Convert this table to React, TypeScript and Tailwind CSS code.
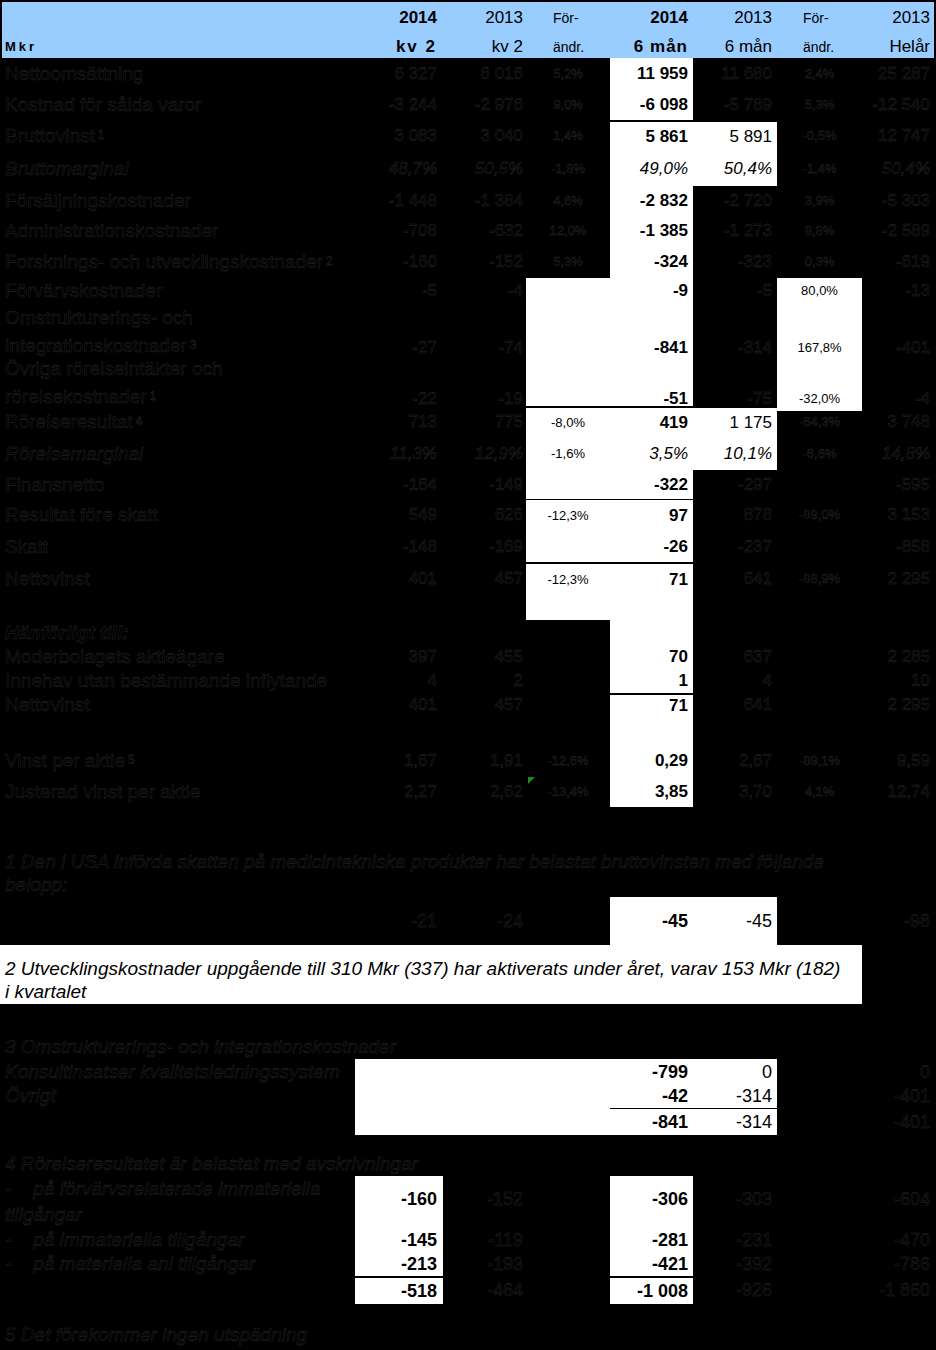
import React from 'react';

const COLS = 'grid grid-cols-[355px_88px_83px_84px_83px_84px_85px_74px]';
const GHOST = 'text-black [-webkit-text-stroke:0.4px_#2c2c2c]';
const PAD = ['pr-[6px]', 'pr-[3px]', '', 'pr-[5px]', 'pr-[5px]', '', 'pr-[6px]'];

type RowDef = {
  label: React.ReactNode;
  h: number;
  v: string[];
  white: number[];
  top?: 1 | 2;
  italic?: boolean;
  twoLine?: boolean;
  mark?: boolean;
};

const sup = (n: string) => <sup className="text-[12px] ml-[3px] relative -top-[3px]">{n}</sup>;

const rows: RowDef[] = [
  { label: 'Nettoomsättning', h: 32, v: ['6 327', '6 016', '5,2%', '11 959', '11 680', '2,4%', '25 287'], white: [3] },
  { label: 'Kostnad för sålda varor', h: 30, v: ['-3 244', '-2 976', '9,0%', '-6 098', '-5 789', '5,3%', '-12 540'], white: [3] },
  { label: <>Bruttovinst{sup('1')}</>, h: 32, v: ['3 083', '3 040', '1,4%', '5 861', '5 891', '-0,5%', '12 747'], white: [3, 4], top: 2 },
  { label: 'Bruttomarginal', h: 34, v: ['48,7%', '50,5%', '-1,8%', '49,0%', '50,4%', '-1,4%', '50,4%'], white: [3, 4], italic: true },
  { label: 'Försäljningskostnader', h: 29, v: ['-1 448', '-1 384', '4,6%', '-2 832', '-2 720', '3,9%', '-5 303'], white: [3] },
  { label: 'Administrationskostnader', h: 31, v: ['-708', '-632', '12,0%', '-1 385', '-1 273', '8,8%', '-2 589'], white: [3] },
  { label: <>Forsknings- och utvecklingskostnader{sup('2')}</>, h: 32, v: ['-160', '-152', '5,3%', '-324', '-323', '0,3%', '-619'], white: [3] },
  { label: 'Förvärvskostnader', h: 26, v: ['-5', '-4', '', '-9', '-5', '80,0%', '-13'], white: [2, 3, 5] },
  { label: <>Omstrukturerings- och<br />integrationskostnader{sup('3')}</>, h: 51, v: ['-27', '-74', '', '-841', '-314', '167,8%', '-401'], white: [2, 3, 5], twoLine: true },
  { label: <>Övriga rörelseintäkter och<br />rörelsekostnader{sup('1')}</>, h: 51, v: ['-22', '-19', '', '-51', '-75', '-32,0%', '-4'], white: [2, 3, 5], twoLine: true },
  { label: <>Rörelseresultat{sup('4')}</>, h: 31, v: ['713', '775', '-8,0%', '419', '1 175', '-64,3%', '3 748'], white: [2, 3, 4], top: 2 },
  { label: 'Rörelsemarginal', h: 33, v: ['11,3%', '12,9%', '-1,6%', '3,5%', '10,1%', '-6,6%', '14,8%'], white: [2, 3, 4], italic: true },
  { label: 'Finansnetto', h: 29, v: ['-164', '-149', '', '-322', '-297', '', '-595'], white: [2, 3] },
  { label: 'Resultat före skatt', h: 32, v: ['549', '626', '-12,3%', '97', '878', '-89,0%', '3 153'], white: [2, 3], top: 1 },
  { label: 'Skatt', h: 31, v: ['-148', '-169', '', '-26', '-237', '', '-858'], white: [2, 3] },
  { label: 'Nettovinst', h: 33, v: ['401', '457', '-12,3%', '71', '641', '-88,9%', '2 295'], white: [2, 3], top: 2 },
  { label: '', h: 25, v: ['', '', '', '', '', '', ''], white: [2, 3] },
  { label: <span className="font-bold">Hänförligt till:</span>, h: 25, v: ['', '', '', '', '', '', ''], white: [3], italic: true },
  { label: 'Moderbolagets aktieägare', h: 24, v: ['397', '455', '', '70', '637', '', '2 285'], white: [3] },
  { label: 'Innehav utan bestämmande inflytande', h: 24, v: ['4', '2', '', '1', '4', '', '10'], white: [3] },
  { label: 'Nettovinst', h: 24, v: ['401', '457', '', '71', '641', '', '2 295'], white: [3], top: 2 },
  { label: '', h: 28, v: ['', '', '', '', '', '', ''], white: [3] },
  { label: <>Vinst per aktie{sup('5')}</>, h: 32, v: ['1,67', '1,91', '-12,6%', '0,29', '2,67', '-89,1%', '9,59'], white: [3] },
  { label: 'Justerad vinst per aktie', h: 30, v: ['2,27', '2,62', '-13,4%', '3,85', '3,70', '4,1%', '12,74'], white: [3], mark: true },
];

function MainRow({ r }: { r: RowDef }) {
  return (
    <div className={COLS} style={{ height: r.h }}>
      <div
        className={`${GHOST} pl-[5px] text-[19px] ${r.italic ? 'italic' : ''} flex flex-col justify-center ${
          r.twoLine ? 'leading-[28px]' : 'leading-[20px]'
        }`}
      >
        <div className="whitespace-nowrap">{r.label}</div>
      </div>
      {r.v.map((v, i) => {
        const white = r.white.includes(i);
        const pct = i === 2 || i === 5;
        const border = white && r.top ? (r.top === 2 ? 'border-t-2 border-black' : 'border-t border-black') : '';
        return (
          <div
            key={i}
            className={`relative flex leading-[20px] whitespace-nowrap ${PAD[i]} ${pct ? 'justify-center text-[13px]' : 'justify-end text-[17px]'} ${
              r.twoLine ? 'items-end pb-[2px]' : 'items-center'
            } ${white ? 'bg-white text-black' : GHOST} ${white && i === 3 && !r.italic ? 'font-bold' : ''} ${
              r.italic && !pct ? 'italic' : ''
            } ${border}`}
          >
            {r.mark && i === 2 && (
              <span className="absolute top-0 left-[2px] w-0 h-0 border-t-[7px] border-t-[#1f8a1f] border-r-[7px] border-r-transparent" />
            )}
            {v}
          </div>
        );
      })}
    </div>
  );
}

function Header() {
  const cell = (a: string, b: string, cls: string, bold = false) => (
    <div className={`flex flex-col ${cls} ${bold ? 'font-bold' : ''}`}>
      <div className="mt-[6px] h-[20px] leading-[20px]">{a}</div>
      <div className="mt-[9px] h-[20px] leading-[20px]">{b}</div>
    </div>
  );
  return (
    <div className="pt-[2px] px-[2px]">
      <div className={`grid grid-cols-[353px_88px_83px_84px_83px_84px_85px_72px] h-[56px] bg-[#99ccff] text-black`}>
        <div className="flex flex-col">
          <div className="mt-[35px] pl-[3px] text-[13px] font-bold tracking-[3px] leading-[20px]">Mkr</div>
        </div>
        {cell('2014', 'kv 2', 'items-end pr-[6px] text-[17px] [&>div:last-child]:tracking-[2px]', true)}
        {cell('2013', 'kv 2', 'items-end pr-[3px] text-[17px]')}
        {cell('För-', 'ändr.', 'items-start pl-[27px] text-[14px]')}
        {cell('2014', '6 mån', 'items-end pr-[5px] text-[17px] [&>div:last-child]:tracking-[1px]', true)}
        {cell('2013', '6 mån', 'items-end pr-[5px] text-[17px]')}
        {cell('För-', 'ändr.', 'items-start pl-[26px] text-[14px]')}
        {cell('2013', 'Helår', 'items-end pr-[4px] text-[17px]')}
      </div>
    </div>
  );
}

type FnCell = { v: string; white?: boolean; bold?: boolean; top?: 1 | 2 };

function FnRow({ label, h, cells, labelCls = '', valCls = 'items-center' }: { label?: React.ReactNode; h: number; cells: FnCell[]; labelCls?: string; valCls?: string }) {
  return (
    <div className={COLS} style={{ height: h }}>
      <div className={`${GHOST} italic pl-[5px] text-[19px] whitespace-nowrap ${labelCls}`}>{label}</div>
      {cells.map((c, i) => (
        <div
          key={i}
          className={`flex justify-end leading-[24px] text-[18px] whitespace-nowrap ${PAD[i]} ${valCls} ${
            c.white ? 'bg-white text-black' : GHOST
          } ${c.bold ? 'font-bold' : ''} ${c.top === 2 ? 'border-t-2 border-black' : c.top === 1 ? 'border-t border-black' : ''}`}
        >
          {c.v}
        </div>
      ))}
    </div>
  );
}

const e = (n = 7): FnCell[] => Array.from({ length: n }, () => ({ v: '' }));

export default function App() {
  return (
    <div className="w-[936px] h-[1350px] bg-black font-['Liberation_Sans',Arial,sans-serif] overflow-hidden">
      <Header />
      {rows.map((r, i) => (
        <MainRow key={i} r={r} />
      ))}

      {/* fotnoter */}
      <div className="h-[43px]" />
      <div className={`${GHOST} italic text-[19px] leading-[23px] pl-[5px] h-[47px] whitespace-nowrap`}>
        1 Den i USA införda skatten på medicintekniska produkter har belastat bruttovinsten med följande
        <br />
        belopp:
      </div>
      <FnRow
        h={48}
        cells={[{ v: '-21' }, { v: '-24' }, { v: '' }, { v: '-45', white: true, bold: true }, { v: '-45', white: true }, { v: '' }, { v: '-98' }]}
      />
      <div className="w-[862px] h-[59px] bg-white text-black italic text-[19px] leading-[23px] pl-[5px] pt-[12px] whitespace-nowrap">
        2 Utvecklingskostnader uppgående till 310 Mkr (337) har aktiverats under året, varav 153 Mkr (182)
        <br />
        i kvartalet
      </div>
      <div className="h-[31px]" />
      <FnRow h={24} label="3 Omstrukturerings- och integrationskostnader" labelCls="leading-[24px]" cells={e()} />
      <FnRow
        h={25}
        label="Konsultinsatser kvalitetsledningssystem"
        labelCls="leading-[25px]"
        cells={[{ v: '', white: true }, { v: '', white: true }, { v: '', white: true }, { v: '-799', white: true, bold: true }, { v: '0', white: true }, { v: '' }, { v: '0' }]}
      />
      <FnRow
        h={24}
        label="Övrigt"
        labelCls="leading-[24px]"
        cells={[{ v: '', white: true }, { v: '', white: true }, { v: '', white: true }, { v: '-42', white: true, bold: true }, { v: '-314', white: true }, { v: '' }, { v: '-401' }]}
      />
      <FnRow
        h={27}
        cells={[
          { v: '', white: true },
          { v: '', white: true },
          { v: '', white: true },
          { v: '-841', white: true, bold: true, top: 1 },
          { v: '-314', white: true, top: 1 },
          { v: '' },
          { v: '-401' },
        ]}
      />
      <div className="h-[16px]" />
      <FnRow h={25} label="4 Rörelseresultatet är belastat med avskrivningar" labelCls="leading-[25px]" cells={e()} />
      <FnRow
        h={51}
        label={
          <>
            -<span className="ml-[22px]">på förvärvsrelaterade immateriella</span>
            <br />
            tillgångar
          </>
        }
        labelCls="leading-[26px]"
        valCls="items-start pt-[11px]"
        cells={[{ v: '-160', white: true, bold: true }, { v: '-152' }, { v: '' }, { v: '-306', white: true, bold: true }, { v: '-303' }, { v: '' }, { v: '-604' }]}
      />
      <FnRow
        h={25}
        label={
          <>
            -<span className="ml-[22px]">på immateriella tillgångar</span>
          </>
        }
        labelCls="leading-[25px]"
        cells={[{ v: '-145', white: true, bold: true }, { v: '-119' }, { v: '' }, { v: '-281', white: true, bold: true }, { v: '-231' }, { v: '' }, { v: '-470' }]}
      />
      <FnRow
        h={24}
        label={
          <>
            -<span className="ml-[22px]">på materiella anl tillgångar</span>
          </>
        }
        labelCls="leading-[24px]"
        cells={[{ v: '-213', white: true, bold: true }, { v: '-193' }, { v: '' }, { v: '-421', white: true, bold: true }, { v: '-392' }, { v: '' }, { v: '-786' }]}
      />
      <FnRow
        h={28}
        cells={[
          { v: '-518', white: true, bold: true, top: 2 },
          { v: '-464' },
          { v: '' },
          { v: '-1 008', white: true, bold: true, top: 2 },
          { v: '-926' },
          { v: '' },
          { v: '-1 860' },
        ]}
      />
      <div className="h-[19px]" />
      <FnRow h={24} label="5 Det förekommer ingen utspädning" labelCls="leading-[24px]" cells={e()} />
    </div>
  );
}
